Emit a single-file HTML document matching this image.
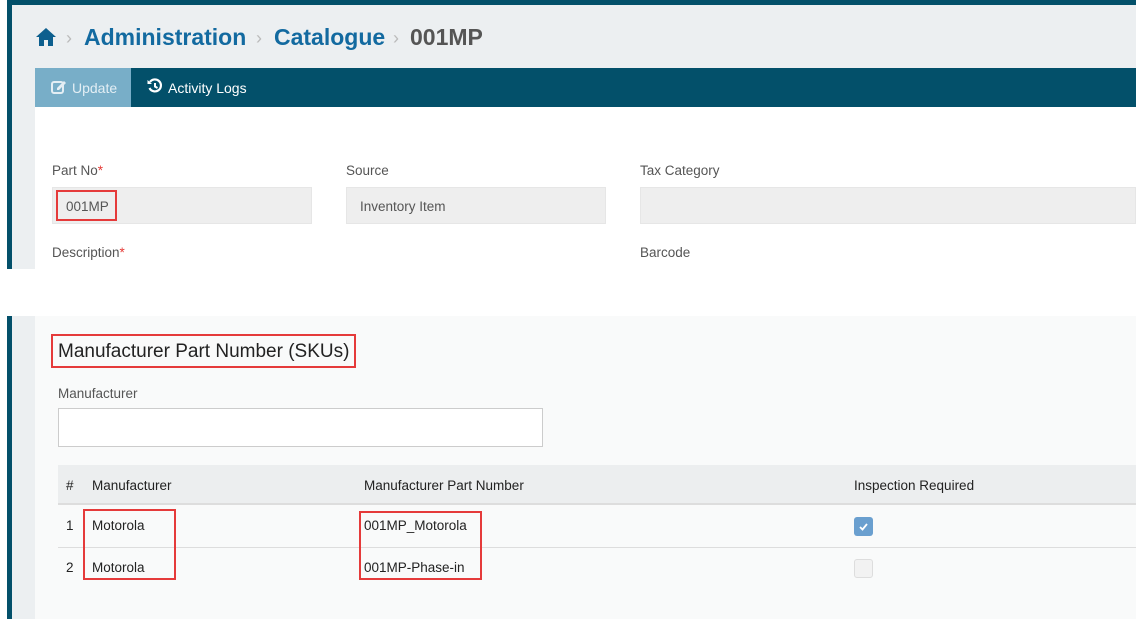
<!DOCTYPE html>
<html><head><style>
*{margin:0;padding:0;box-sizing:border-box}
body{width:1136px;height:619px;overflow:hidden;background:#fff;font-family:"Liberation Sans",sans-serif;position:relative;color:#333}
div,span{position:absolute}
.lbl{font-size:13.5px;color:#555}
.req{color:#e53935}
.inp{background:#eee;border:1px solid #e6e6e6;height:37px}
.red{border:2px solid #e53a3a}
.t{font-size:13.5px;color:#222}
</style></head><body>
<div style="left:7px;top:0;width:1129px;height:5px;background:#03506a"></div>
<div style="left:7px;top:0;width:5px;height:269px;background:#03506a"></div>
<div style="left:12px;top:5px;width:1124px;height:264px;background:#eceff1"></div>
<svg style="position:absolute;left:35px;top:27px" width="22" height="20" viewBox="0 0 22 20"><path d="M11 1 L1 10 L4 10 L4 19 L9 19 L9 13 L13 13 L13 19 L18 19 L18 10 L21 10 Z" fill="#0d5f8e"/></svg>
<span style="left:66px;top:28px;font-size:18px;color:#bbb">›</span>
<span style="left:84px;top:24px;font-size:23px;font-weight:bold;color:#136aa0">Administration</span>
<span style="left:256px;top:28px;font-size:18px;color:#bbb">›</span>
<span style="left:274px;top:24px;font-size:23px;font-weight:bold;color:#136aa0">Catalogue</span>
<span style="left:393px;top:28px;font-size:18px;color:#bbb">›</span>
<span style="left:410px;top:24px;font-size:23px;font-weight:bold;color:#555">001MP</span>
<div style="left:35px;top:68px;width:1101px;height:39px;background:#03506a"></div>
<div style="left:35px;top:68px;width:96px;height:39px;background:#78aec8"></div>
<svg style="position:absolute;left:51px;top:79px" width="16" height="15" viewBox="0 0 16 15"><rect x="1" y="3" width="11" height="11" rx="2" fill="none" stroke="#e3eef4" stroke-width="2"/><path d="M6 9 L13 2 L15 4 L8 11 L6 11Z" fill="#e3eef4"/></svg>
<span style="left:72px;top:80px;font-size:14px;color:#e3eef4">Update</span>
<svg style="position:absolute;left:147px;top:78px" width="16" height="16" viewBox="0 0 16 16"><path d="M3 4 A6 6 0 1 1 2.5 10" fill="none" stroke="#fff" stroke-width="2.2"/><path d="M0.5 2 L5 6 L0.5 6Z" fill="#fff"/><path d="M8 5 L8 8.5 L10.5 10" stroke="#fff" stroke-width="2" fill="none"/></svg>
<span style="left:168px;top:80px;font-size:14px;color:#fff">Activity Logs</span>
<div style="left:35px;top:107px;width:1101px;height:162px;background:#fff"></div>
<span class="lbl" style="left:52px;top:163px">Part No<span class="req" style="position:static">*</span></span>
<span class="lbl" style="left:346px;top:163px">Source</span>
<span class="lbl" style="left:640px;top:163px">Tax Category</span>
<div class="inp" style="left:52px;top:187px;width:260px"></div>
<div class="inp" style="left:346px;top:187px;width:260px"></div>
<div class="inp" style="left:640px;top:187px;width:496px"></div>
<span style="left:66px;top:199px;font-size:13.5px;color:#555">001MP</span>
<span style="left:360px;top:199px;font-size:13.5px;color:#555">Inventory Item</span>
<div class="red" style="left:56px;top:190px;width:61px;height:31px"></div>
<span class="lbl" style="left:52px;top:245px">Description<span class="req" style="position:static">*</span></span>
<span class="lbl" style="left:640px;top:245px">Barcode</span>

<div style="left:7px;top:316px;width:5px;height:303px;background:#03506a"></div>
<div style="left:12px;top:316px;width:23px;height:303px;background:#eceff1"></div>
<div style="left:35px;top:316px;width:1101px;height:303px;background:#f9fafa"></div>
<div class="red" style="left:51px;top:334px;width:305px;height:34px"></div>
<span style="left:58px;top:341px;font-size:19px;color:#222">Manufacturer Part Number (SKUs)</span>
<span class="lbl" style="left:58px;top:386px">Manufacturer</span>
<div style="left:58px;top:408px;width:485px;height:39px;background:#fff;border:1px solid #ccc"></div>
<div style="left:58px;top:465px;width:1078px;height:40px;background:#eceeef;border-bottom:2px solid #ddd"></div>
<span class="t" style="left:66px;top:478px">#</span>
<span class="t" style="left:92px;top:478px">Manufacturer</span>
<span class="t" style="left:364px;top:478px">Manufacturer Part Number</span>
<span class="t" style="left:854px;top:478px">Inspection Required</span>
<div style="left:58px;top:547px;width:1078px;height:1px;background:#ddd"></div>
<span class="t" style="left:66px;top:518px">1</span>
<span class="t" style="left:92px;top:518px">Motorola</span>
<span class="t" style="left:364px;top:518px">001MP_Motorola</span>
<span class="t" style="left:66px;top:560px">2</span>
<span class="t" style="left:92px;top:560px">Motorola</span>
<span class="t" style="left:364px;top:560px">001MP-Phase-in</span>
<div style="left:854px;top:517px;width:19px;height:19px;border-radius:3px;background:#6a9fcf"></div>
<svg style="position:absolute;left:857px;top:520px" width="13" height="13" viewBox="0 0 13 13"><path d="M3 7 L5.5 9.5 L10 4" fill="none" stroke="#fff" stroke-width="1.8"/></svg>
<div style="left:854px;top:559px;width:19px;height:19px;border-radius:3px;background:#f2f2f2;border:1px solid #ddd"></div>
<div class="red" style="left:83px;top:509px;width:93px;height:71px"></div>
<div class="red" style="left:359px;top:511px;width:123px;height:69px"></div>
</body></html>
